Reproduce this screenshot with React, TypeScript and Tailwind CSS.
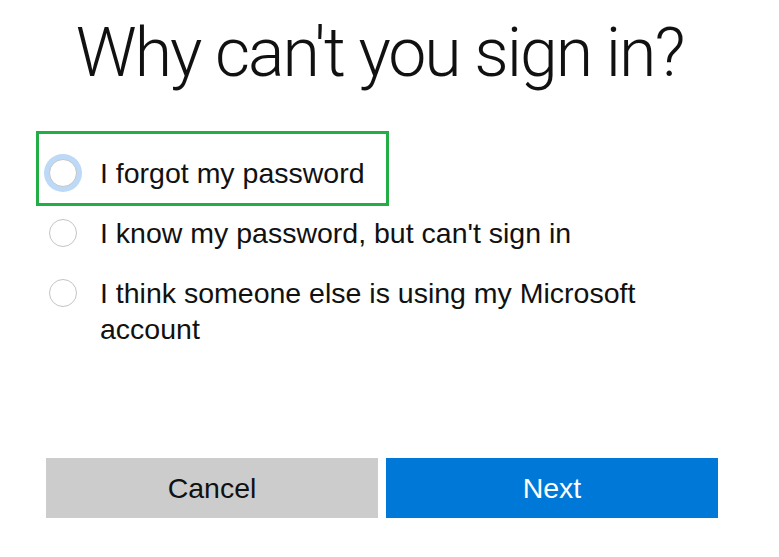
import React from "react";

const options = [
  { id: "forgot", label: "I forgot my password", focused: true },
  { id: "know", label: "I know my password, but can't sign in" },
  { id: "someone", label: "I think someone else is using my Microsoft account" },
];

function Radio({ focused }: { focused?: boolean }) {
  return (
    <span className="flex h-[36px] w-[38px] shrink-0 items-center justify-center">
      <span
        className={
          "flex h-[38px] w-[38px] shrink-0 items-center justify-center rounded-full " +
          (focused ? "bg-[#bcd9f7]" : "")
        }
      >
        <span className="h-[28px] w-[28px] rounded-full border-[1.5px] border-[#c4c4c4] bg-white" />
      </span>
    </span>
  );
}

export default function App() {
  return (
    <div
      className="h-[557px] w-[779px] overflow-hidden bg-white text-black"
      style={{ fontFamily: '"Liberation Sans", Arial, sans-serif' }}
    >
      <h1
        className="pt-[13px] pr-[20px] text-center text-[68px] leading-[80px] tracking-[-2px] text-[#111]"
        style={{ fontFamily: 'Roboto, "Liberation Sans", sans-serif', fontWeight: 300 }}
      >
        Why can't you sign in?
      </h1>

      <div className="mt-[38px] flex flex-col">
        {options.map((o, i) => (
          <div
            key={o.id}
            className={
              "flex items-start gap-[18px] " +
              (i === 0
                ? "ml-[36px] w-[353px] border-[3px] border-[#22ad45] pl-[5px] pt-[21px] pb-[12px]"
                : i === 1
                ? "ml-[44px] mt-[9px] w-[640px]"
                : "ml-[44px] mt-[24px] w-[640px]")
            }
          >
            <Radio focused={o.focused} />
            <span className="text-[28.5px] leading-[36px] text-[#111]">{o.label}</span>
          </div>
        ))}
      </div>

      <div className="ml-[46px] mt-[111px] flex w-[672px] gap-[8px]">
        <button className="h-[60px] flex-1 bg-[#cccccc] text-[28.5px] text-[#111]">Cancel</button>
        <button className="h-[60px] flex-1 bg-[#0078d7] text-[28.5px] text-white">Next</button>
      </div>
    </div>
  );
}
